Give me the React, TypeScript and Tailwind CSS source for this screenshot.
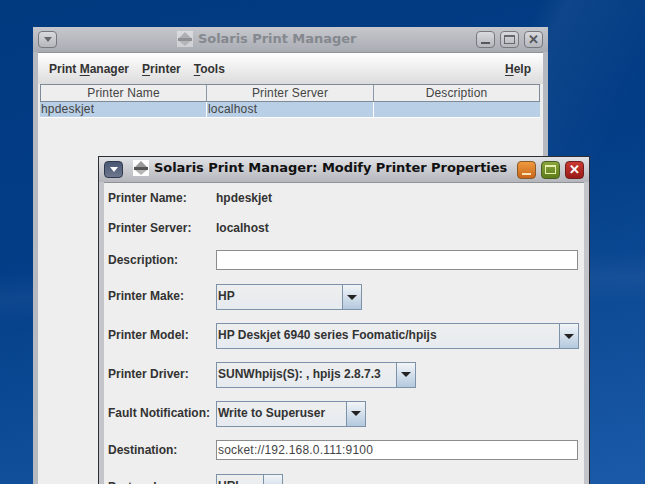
const sans = "font-['Liberation_Sans',Arial,sans-serif]"

function ComboArrow() {
  return (
    <div className="w-[19px] shrink-0 h-full border-l border-[#7d92a8] flex items-center justify-center bg-gradient-to-b from-[#f2f5f8] to-[#b4c9de]">
      <div className="w-0 h-0 border-x-[5px] border-x-transparent border-t-[5px] border-t-[#222]" />
    </div>
  )
}

function Combo({ text, width }: { text: string; width: string }) {
  return (
    <div className={`${width} h-[26px] flex border border-[#7d92a8] bg-[#eeeeee]`}>
      <div className="flex-1 min-w-0 flex items-center pl-[1px] pb-[2px] text-[12px] font-bold text-[#333] bg-gradient-to-b from-[#eeeeee] to-[#e6ebf0] whitespace-nowrap overflow-hidden">
        {text}
      </div>
      <ComboArrow />
    </div>
  )
}

function Row({ label, height, raised, children }: { label: string; height: string; raised?: boolean; children: React.ReactNode }) {
  return (
    <div className={`${height} flex items-center shrink-0`}>
      <div className={`w-[108px] shrink-0 text-[12px] font-bold text-[#333] whitespace-nowrap ${raised ? "pb-[2px]" : ""}`}>{label}</div>
      {children}
    </div>
  )
}

function TextField({ value }: { value?: string }) {
  return (
    <div className="w-[362px] h-[20px] bg-white border border-[#8c8c8c] flex items-center pl-[1px] text-[12px] tracking-[0.2px] text-[#444]">
      {value}
    </div>
  )
}

function SolarisIcon({ dim }: { dim?: boolean }) {
  return (
    <svg width="16" height="16" viewBox="0 0 16 16" className={dim ? "opacity-40" : ""}>
      <rect width="16" height="16" fill="#fff" />
      <path d="M8 1 L14 7 L2 7 Z" fill="#9a9a9a" />
      <rect x="1" y="7" width="14" height="3" fill="#555" />
      <path d="M2 10 L14 10 L8 15 Z" fill="#b5b5b5" />
    </svg>
  )
}

function MenuLetter({ children }: { children: React.ReactNode }) {
  return <span className="underline underline-offset-2">{children}</span>
}

function GreyButton({ children }: { children: React.ReactNode }) {
  return (
    <div className="w-[19px] h-[17px] rounded-[4px] border border-[#77797f] bg-gradient-to-b from-[#d8dade] to-[#b5b7bd] flex items-center justify-center">
      {children}
    </div>
  )
}

function ColorButton({ from, to, border, children }: { from: string; to: string; border: string; children: React.ReactNode }) {
  return (
    <div className={`w-[19px] h-[18px] rounded-[4px] border ${border} bg-gradient-to-b ${from} ${to} flex items-center justify-center`}>
      {children}
    </div>
  )
}

export default function App() {
  return (
    <div className={`relative w-[645px] h-[484px] overflow-hidden ${sans} bg-[linear-gradient(118deg,transparent_60%,rgba(255,255,255,0.05)_63%,transparent_76%),linear-gradient(178deg,transparent_54%,rgba(255,255,255,0.04)_59%,transparent_64%),linear-gradient(168deg,#023a80_0%,#023d86_42%,#1a5aa8_100%)]`}>

      {/* back window */}
      <div className="absolute left-[33px] top-[27px] w-[515px] h-[480px] bg-[#b6b9c0] px-[5px] flex flex-col">
        <div className="h-[25px] shrink-0 -mx-[5px] px-[5px] bg-gradient-to-b from-[#c6c8cd] to-[#a9acb3] relative flex items-center justify-between">
          <GreyButton>
            <div className="w-0 h-0 border-x-[4px] border-x-transparent border-t-[5px] border-t-[#66686d]" />
          </GreyButton>
          <div className="absolute left-[144px] top-[4px] flex items-center gap-[5px] text-[13px] leading-[16px] font-bold tracking-[-0.05px] text-[#85888e] whitespace-nowrap font-['DejaVu_Sans',sans-serif]">
            <SolarisIcon dim />
            <span>Solaris Print Manager</span>
          </div>
          <div className="flex gap-[5px]">
            <GreyButton>
              <div className="w-[9px] h-[2px] mt-[6px] bg-[#55575c]" />
            </GreyButton>
            <GreyButton>
              <div className="w-[11px] h-[9px] border border-[#66686d] border-t-2" />
            </GreyButton>
            <GreyButton>
              <span className="text-[13px] leading-none font-bold text-[#55575c]">✕</span>
            </GreyButton>
          </div>
        </div>

        <div className="flex-1 bg-[#eeeeee] border-t border-[#8f9297] flex flex-col">
          <div className="h-[31px] shrink-0 flex items-center px-[11px] text-[12px] font-bold text-[#333] bg-gradient-to-b from-white to-[#dcdcdc] whitespace-nowrap">
            <span>Print <MenuLetter>M</MenuLetter>anager</span>
            <span className="ml-[13px]"><MenuLetter>P</MenuLetter>rinter</span>
            <span className="ml-[13px]"><MenuLetter>T</MenuLetter>ools</span>
            <span className="ml-auto mr-[1px]"><MenuLetter>H</MenuLetter>elp</span>
          </div>

          <div className="ml-[2px] mr-[3px] border border-[#7e8a97] flex h-[18px] text-[12px] tracking-[0.15px] text-[#444] bg-[#eeeeee] shrink-0">
            <div className="w-[166px] flex items-center justify-center border-r border-[#8b99a8]">Printer Name</div>
            <div className="w-[167px] flex items-center justify-center border-r border-[#8b99a8]">Printer Server</div>
            <div className="flex-1 flex items-center justify-center">Description</div>
          </div>
          <div className="ml-[2px] mr-[3px] flex h-[16px] text-[12px] tracking-[0.2px] text-[#444] bg-[#b8cfe5] shrink-0 border-b border-b-white">
            <div className="w-[167px] pl-[1px] border-r border-white leading-[14px]">hpdeskjet</div>
            <div className="w-[167px] pl-[1px] border-r border-white leading-[14px]">localhost</div>
            <div className="flex-1" />
          </div>
        </div>
      </div>

      {/* front window */}
      <div className="absolute left-[98px] top-[156px] w-[492px] h-[360px] bg-[#c3c5cb] border border-[#2c2e33] border-b-0 px-[5px] flex flex-col">
        <div className="h-[25px] shrink-0 -mx-[5px] px-[5px] bg-gradient-to-b from-[#e2e3e6] to-[#b4b6bc] relative flex items-center justify-between">
          <div className="w-[19px] h-[17px] rounded-[4px] border border-[#2f3a4e] bg-gradient-to-b from-[#4a5874] to-[#6d778c] flex items-center justify-center">
            <div className="w-0 h-0 border-x-[4px] border-x-transparent border-t-[5px] border-t-white" />
          </div>
          <div className="absolute left-[34px] top-[3px] flex items-center gap-[5px] text-[13px] leading-[16px] font-bold tracking-[-0.05px] text-[#111] whitespace-nowrap font-['DejaVu_Sans',sans-serif]">
            <SolarisIcon />
            <span>Solaris Print Manager: Modify Printer Properties</span>
          </div>
          <div className="flex gap-[5px] ml-auto">
            <ColorButton from="from-[#ee9a3f]" to="to-[#c9661a]" border="border-[#8a5a2a]">
              <div className="w-[9px] h-[2px] mt-[8px] bg-[#fbe3b8]" />
            </ColorButton>
            <ColorButton from="from-[#8aa63a]" to="to-[#5d7d1a]" border="border-[#4b5f25]">
              <div className="w-[11px] h-[9px] border border-[#e9efb0] border-t-2" />
            </ColorButton>
            <ColorButton from="from-[#c93a33]" to="to-[#9a1a16]" border="border-[#6e2020]">
              <span className="text-[13px] leading-none font-bold text-white">✕</span>
            </ColorButton>
          </div>
        </div>

        <div className="flex-1 bg-[#eeeeee] border-t border-[#8f9297] pl-[4px] flex flex-col">
          <Row label="Printer Name:" height="h-[30px]">
            <div className="text-[12px] font-bold text-[#333]">hpdeskjet</div>
          </Row>
          <Row label="Printer Server:" height="h-[30px]">
            <div className="text-[12px] font-bold text-[#333]">localhost</div>
          </Row>
          <Row label="Description:" height="h-[34px]">
            <TextField />
          </Row>
          <Row label="Printer Make:" height="h-[40px]" raised>
            <Combo text="HP" width="w-[146px]" />
          </Row>
          <Row label="Printer Model:" height="h-[38px]" raised>
            <Combo text="HP Deskjet 6940 series Foomatic/hpijs" width="w-[363px]" />
          </Row>
          <Row label="Printer Driver:" height="h-[39px]" raised>
            <Combo text="SUNWhpijs(S): , hpijs 2.8.7.3" width="w-[200px]" />
          </Row>
          <Row label="Fault Notification:" height="h-[39px]" raised>
            <Combo text="Write to Superuser" width="w-[150px]" />
          </Row>
          <Row label="Destination:" height="h-[34px]">
            <TextField value="socket://192.168.0.111:9100" />
          </Row>
          <Row label="Protocol:" height="h-[40px]">
            <Combo text="URI" width="w-[67px]" />
          </Row>
        </div>
      </div>
    </div>
  )
}
